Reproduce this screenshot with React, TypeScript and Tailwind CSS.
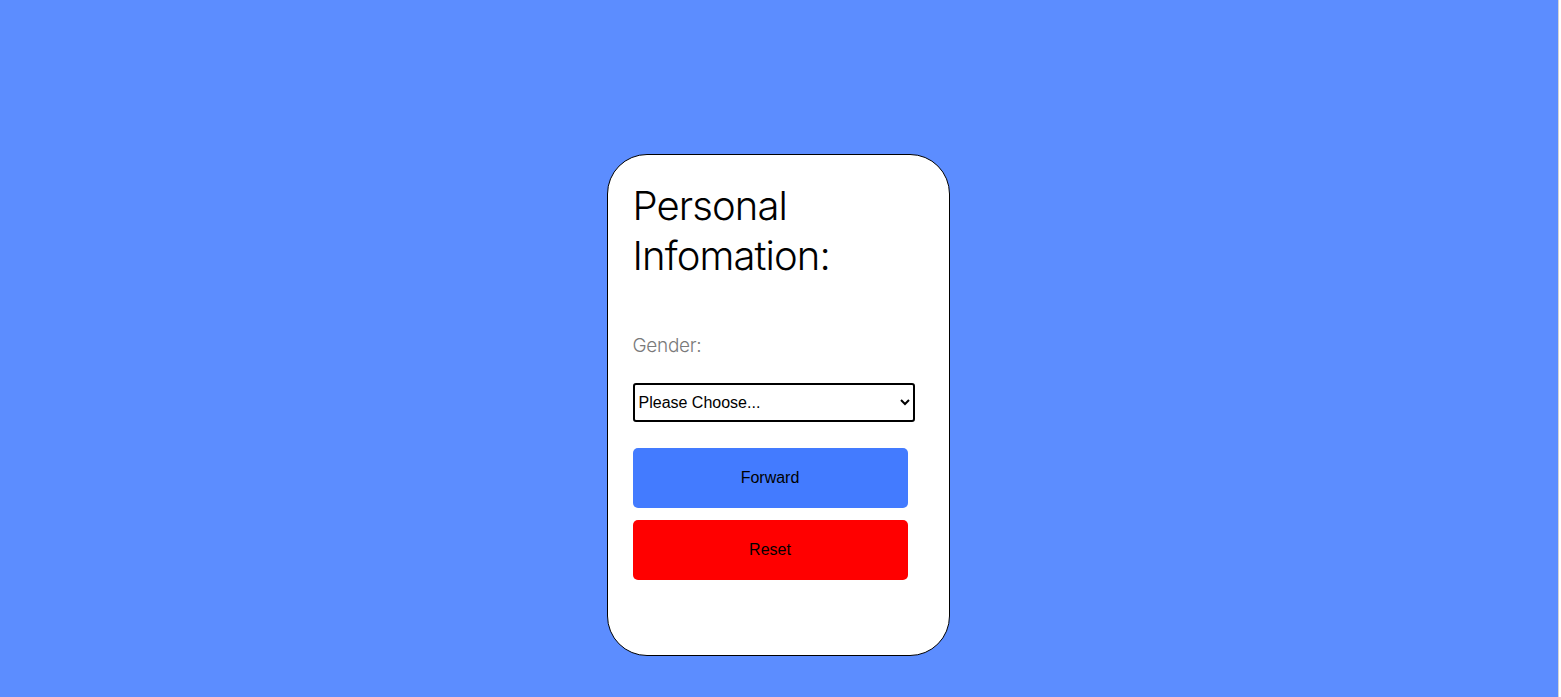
export default function App() {
  return (
    <div className="flex h-[697px] w-full">
      <div className="flex flex-1 justify-center bg-[#5c8dff] pr-[2px] pt-[154px]">
        <div className="flex h-[502px] w-[343px] flex-col rounded-[40px] border border-black bg-white px-[25px] pt-[26px]">
          <h1 className="font-['Inter',sans-serif] text-[40px] font-light leading-[50px] tracking-[-0.9px] text-black">
            Personal
            <br />
            Infomation:
          </h1>
          <label className="mt-[52px] font-['Inter',sans-serif] text-[19px] font-light leading-[26px] tracking-[-0.3px] text-[#7a7a7a]">
            Gender:
          </label>
          <div className="mt-[24px] w-[282px]">
            <select className="h-[39px] w-full rounded-[3px] border-2 border-black bg-white pl-0 font-['Liberation_Sans',Arial,sans-serif] text-[16px] text-black">
              <option>Please Choose...</option>
            </select>
          </div>
          <button className="mt-[26px] h-[60px] w-[275px] rounded-[5px] bg-[#437bff] font-['Liberation_Sans',Arial,sans-serif] text-[16px] text-black">
            Forward
          </button>
          <button className="mt-[12px] h-[60px] w-[275px] rounded-[5px] bg-[#ff0000] font-['Liberation_Sans',Arial,sans-serif] text-[16px] text-black">
            Reset
          </button>
        </div>
      </div>
      <div className="w-[3px] border-l border-[#d4d4d4] bg-white" />
    </div>
  );
}
